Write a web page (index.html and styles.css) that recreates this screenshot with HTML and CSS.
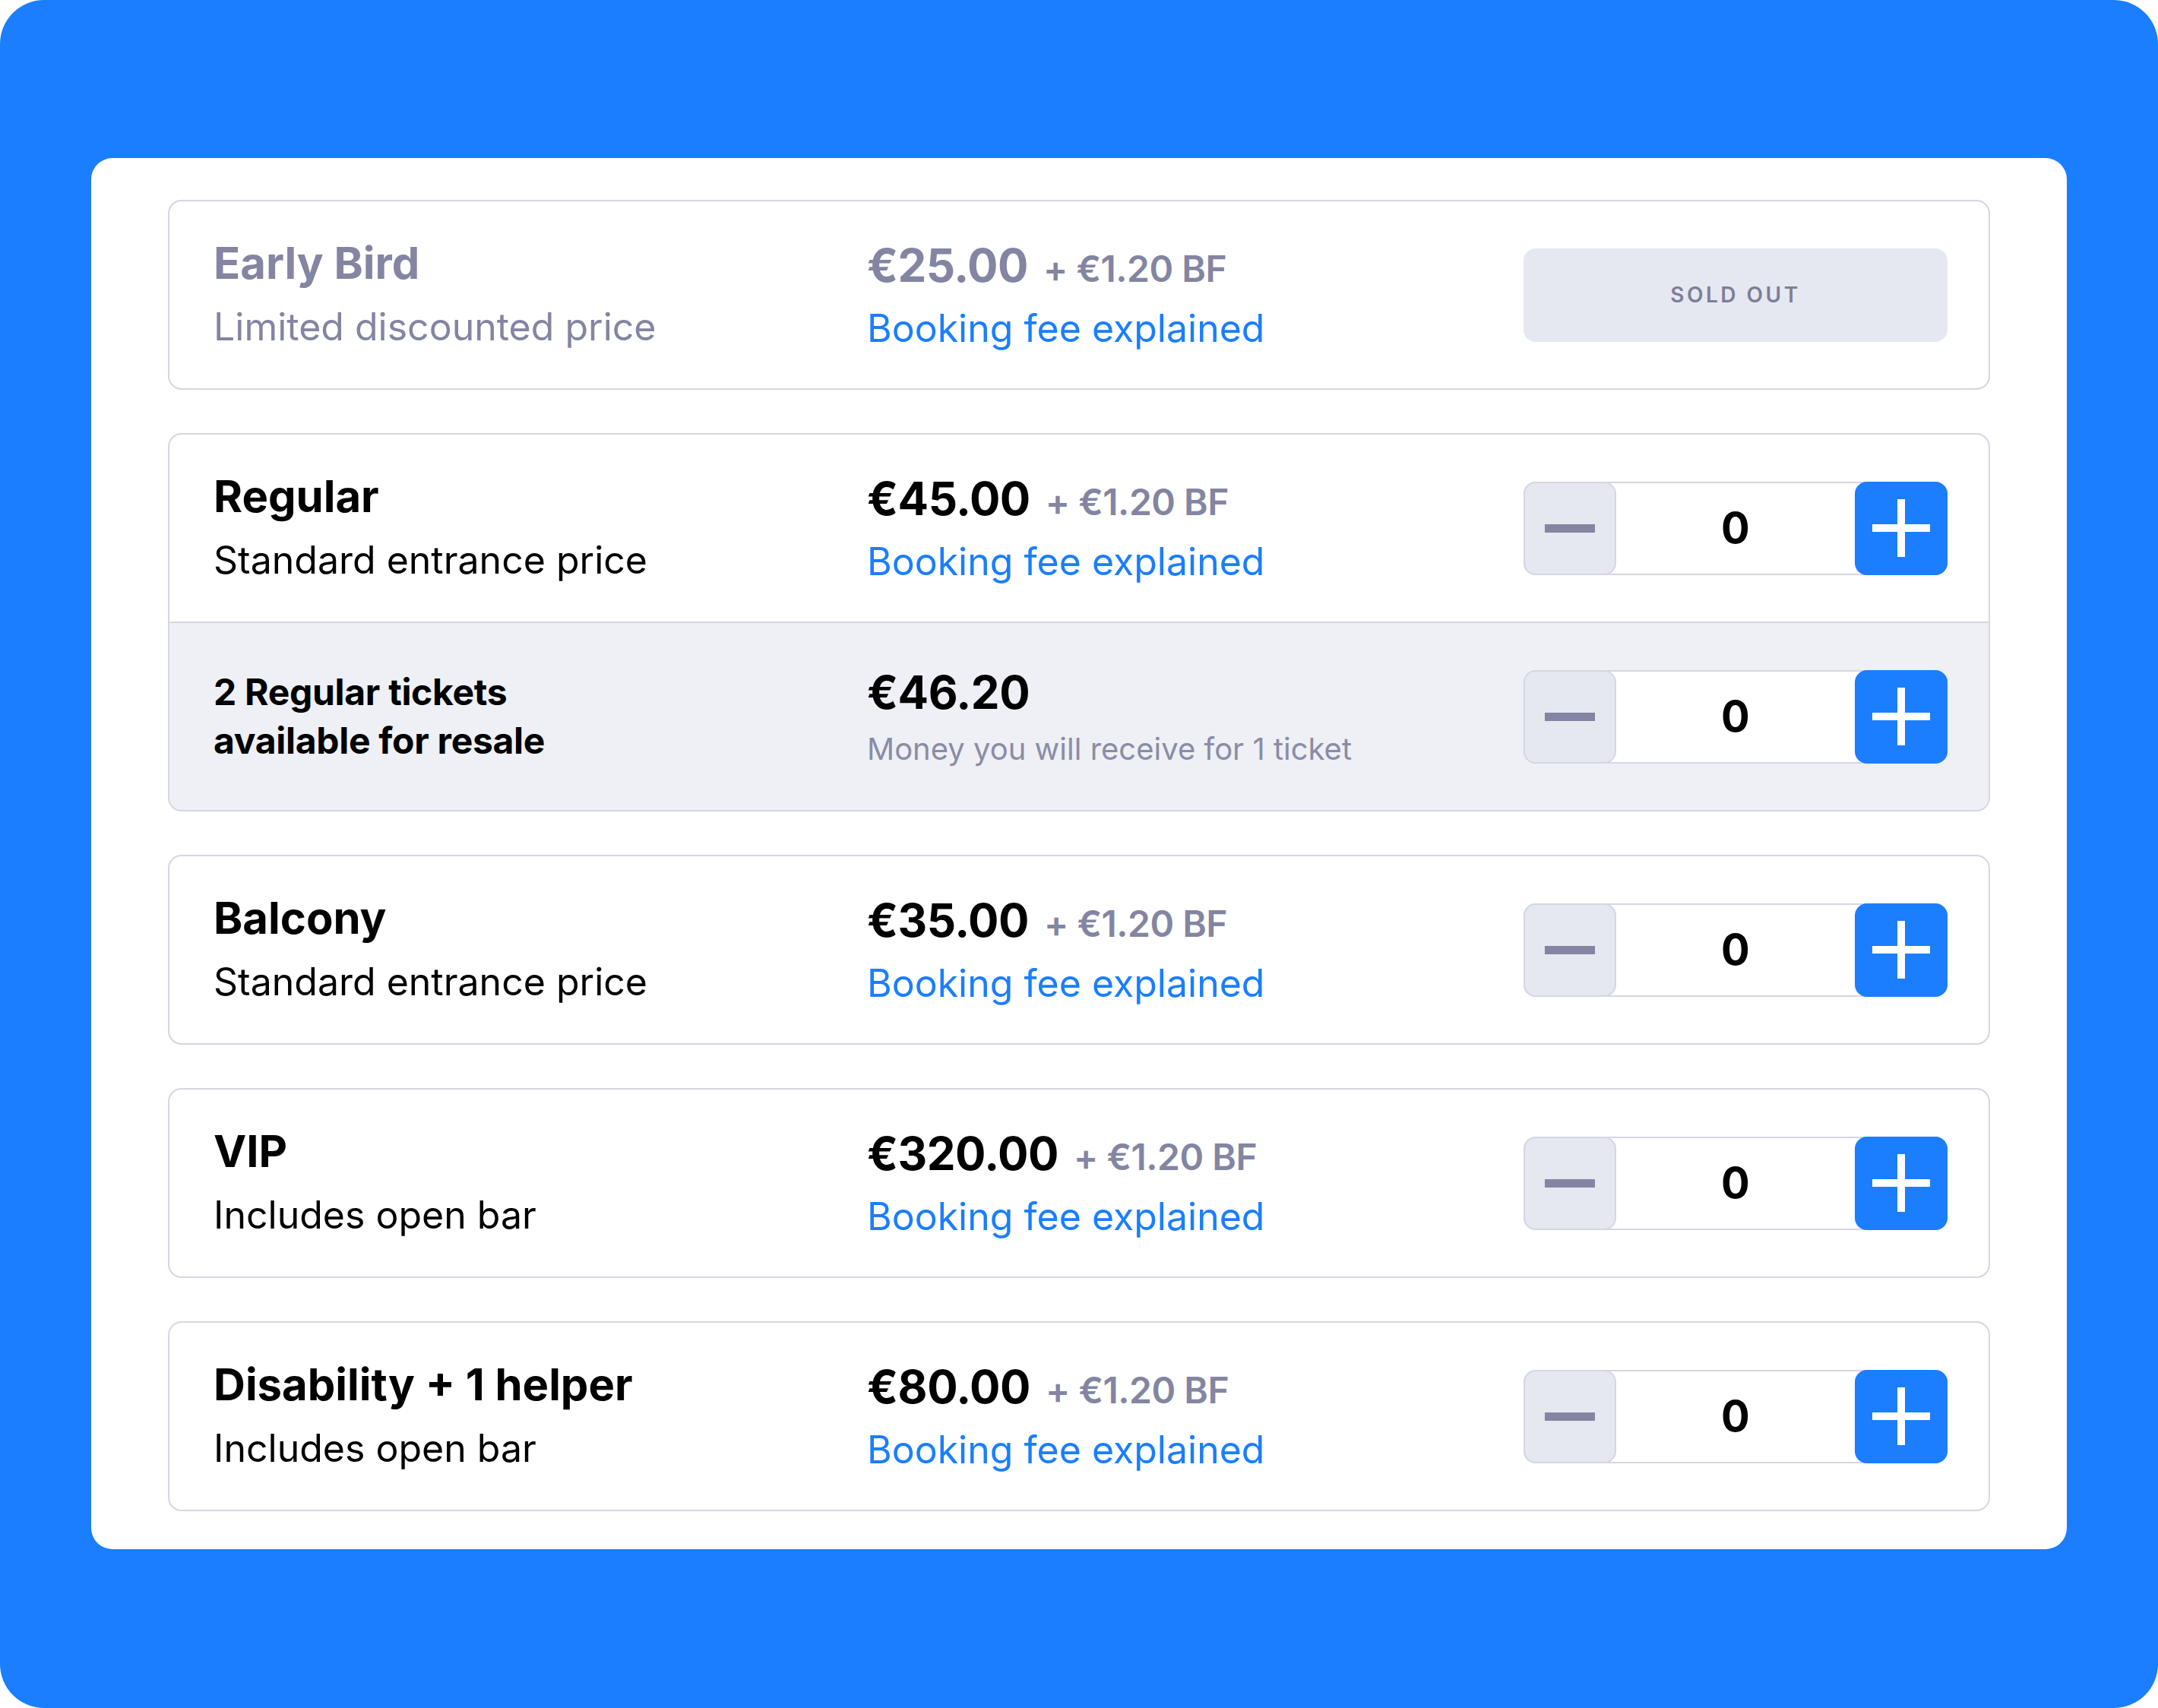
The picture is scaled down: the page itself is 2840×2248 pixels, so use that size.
FILE: index.html
```html
<!DOCTYPE html>
<html lang="en">
<head>
  <meta charset="UTF-8">
  <title>Tickets</title>
  <link rel="stylesheet" href="styles.css">
</head>
<body>
  <div class="frame">
    <div class="panel">

      <div class="ticket">
        <div class="row muted">
          <div class="info">
            <div class="name">Early Bird</div>
            <div class="desc">Limited discounted price</div>
          </div>
          <div class="pricing">
            <div class="price-line"><span class="price">€25.00</span><span class="fee">+ €1.20 BF</span></div>
            <a href="#" class="fee-link">Booking fee explained</a>
          </div>
          <div class="action">
            <div class="soldout">SOLD OUT</div>
          </div>
        </div>
      </div>

      <div class="ticket">
        <div class="row">
          <div class="info">
            <div class="name">Regular</div>
            <div class="desc">Standard entrance price</div>
          </div>
          <div class="pricing">
            <div class="price-line"><span class="price">€45.00</span><span class="fee">+ €1.20 BF</span></div>
            <a href="#" class="fee-link">Booking fee explained</a>
          </div>
          <div class="action">
            <div class="stepper">
              <button class="step minus"><span class="bar"></span></button>
              <span class="count">0</span>
              <button class="step plus"><span class="bar"></span><span class="bar vert"></span></button>
            </div>
          </div>
        </div>
        <div class="row resale">
          <div class="info">
            <div class="resale-title">2 Regular tickets<br>available for resale</div>
          </div>
          <div class="pricing">
            <div class="price-line"><span class="price">€46.20</span></div>
            <div class="receive">Money you will receive for 1 ticket</div>
          </div>
          <div class="action">
            <div class="stepper">
              <button class="step minus"><span class="bar"></span></button>
              <span class="count">0</span>
              <button class="step plus"><span class="bar"></span><span class="bar vert"></span></button>
            </div>
          </div>
        </div>
      </div>

      <div class="ticket">
        <div class="row">
          <div class="info">
            <div class="name">Balcony</div>
            <div class="desc">Standard entrance price</div>
          </div>
          <div class="pricing">
            <div class="price-line"><span class="price">€35.00</span><span class="fee">+ €1.20 BF</span></div>
            <a href="#" class="fee-link">Booking fee explained</a>
          </div>
          <div class="action">
            <div class="stepper">
              <button class="step minus"><span class="bar"></span></button>
              <span class="count">0</span>
              <button class="step plus"><span class="bar"></span><span class="bar vert"></span></button>
            </div>
          </div>
        </div>
      </div>

      <div class="ticket">
        <div class="row">
          <div class="info">
            <div class="name">VIP</div>
            <div class="desc">Includes open bar</div>
          </div>
          <div class="pricing">
            <div class="price-line"><span class="price">€320.00</span><span class="fee">+ €1.20 BF</span></div>
            <a href="#" class="fee-link">Booking fee explained</a>
          </div>
          <div class="action">
            <div class="stepper">
              <button class="step minus"><span class="bar"></span></button>
              <span class="count">0</span>
              <button class="step plus"><span class="bar"></span><span class="bar vert"></span></button>
            </div>
          </div>
        </div>
      </div>

      <div class="ticket">
        <div class="row">
          <div class="info">
            <div class="name">Disability + 1 helper</div>
            <div class="desc">Includes open bar</div>
          </div>
          <div class="pricing">
            <div class="price-line"><span class="price">€80.00</span><span class="fee">+ €1.20 BF</span></div>
            <a href="#" class="fee-link">Booking fee explained</a>
          </div>
          <div class="action">
            <div class="stepper">
              <button class="step minus"><span class="bar"></span></button>
              <span class="count">0</span>
              <button class="step plus"><span class="bar"></span><span class="bar vert"></span></button>
            </div>
          </div>
        </div>
      </div>

    </div>
  </div>
</body>
</html>
```

FILE: styles.css
```css
body {
  margin: 0;
  background: #ffffff;
  font-family: Inter, "Noto Sans", sans-serif;
  color: #000000;
}
.frame {
  width: 2840px;
  height: 2248px;
  box-sizing: border-box;
  padding: 208px 120px 0;
  background: #1a7eff;
  border-radius: 58px;
}
.panel {
  background: #ffffff;
  border-radius: 28px;
  padding: 55px 101px 50px;
  display: flex;
  flex-direction: column;
  gap: 57px;
}
.ticket {
  border: 2px solid #d5d6e4;
  border-radius: 18px;
  overflow: hidden;
}
.row {
  display: grid;
  grid-template-columns: 860px 1fr 558px;
  align-items: center;
  height: 246px;
  padding: 0 54px 0 58px;
}
.row + .row {
  border-top: 2px solid #d5d6e4;
}
.resale {
  background: #eef0f5;
}
.name {
  font-size: 58px;
  font-weight: 700;
  line-height: 72px;
  margin-top: -4px;
}
.desc {
  margin-top: 16px;
  font-size: 50px;
  line-height: 64px;
}
.resale-title {
  font-size: 48px;
  font-weight: 700;
  line-height: 64px;
  letter-spacing: -0.3px;
}
.price-line {
  display: flex;
  align-items: baseline;
  gap: 20px;
}
.price {
  font-size: 60px;
  font-weight: 700;
  line-height: 74px;
  letter-spacing: -0.5px;
}
.fee {
  font-size: 48px;
  font-weight: 600;
  color: #8385a2;
  letter-spacing: -0.5px;
}
.fee-link {
  display: block;
  margin-top: 14px;
  font-size: 50px;
  line-height: 64px;
  color: #1a7eff;
  text-decoration: none;
}
.receive {
  margin-top: 12px;
  font-size: 40px;
  line-height: 52px;
  color: #8a8ca6;
}
.muted .name,
.muted .desc,
.muted .price {
  color: #8385a2;
}
.soldout {
  height: 123px;
  border-radius: 16px;
  background: #e6e8f1;
  color: #7c7e98;
  font-size: 28px;
  font-weight: 600;
  letter-spacing: 3.5px;
  display: flex;
  align-items: center;
  justify-content: center;
}
.stepper {
  height: 123px;
  box-sizing: border-box;
  border: 2px solid #d5d6e4;
  border-radius: 16px;
  background: #ffffff;
  display: flex;
  align-items: stretch;
}
.step {
  width: 122px;
  border: none;
  padding: 0;
  border-radius: 16px;
  position: relative;
  display: flex;
  align-items: center;
  justify-content: center;
}
.minus {
  background: #e6e8f0;
  border: 2px solid #d5d6e4;
  margin: -2px 0 -2px -2px;
}
.plus {
  background: #1a7eff;
  margin: -2px -2px -2px 0;
}
.minus .bar {
  width: 66px;
  height: 11px;
  background: #8385a2;
}
.plus .bar {
  position: absolute;
  width: 76px;
  height: 10px;
  background: #ffffff;
}
.plus .bar.vert {
  width: 10px;
  height: 76px;
}
.count {
  flex: 1;
  display: flex;
  align-items: center;
  justify-content: center;
  font-size: 56px;
  font-weight: 700;
}
```
